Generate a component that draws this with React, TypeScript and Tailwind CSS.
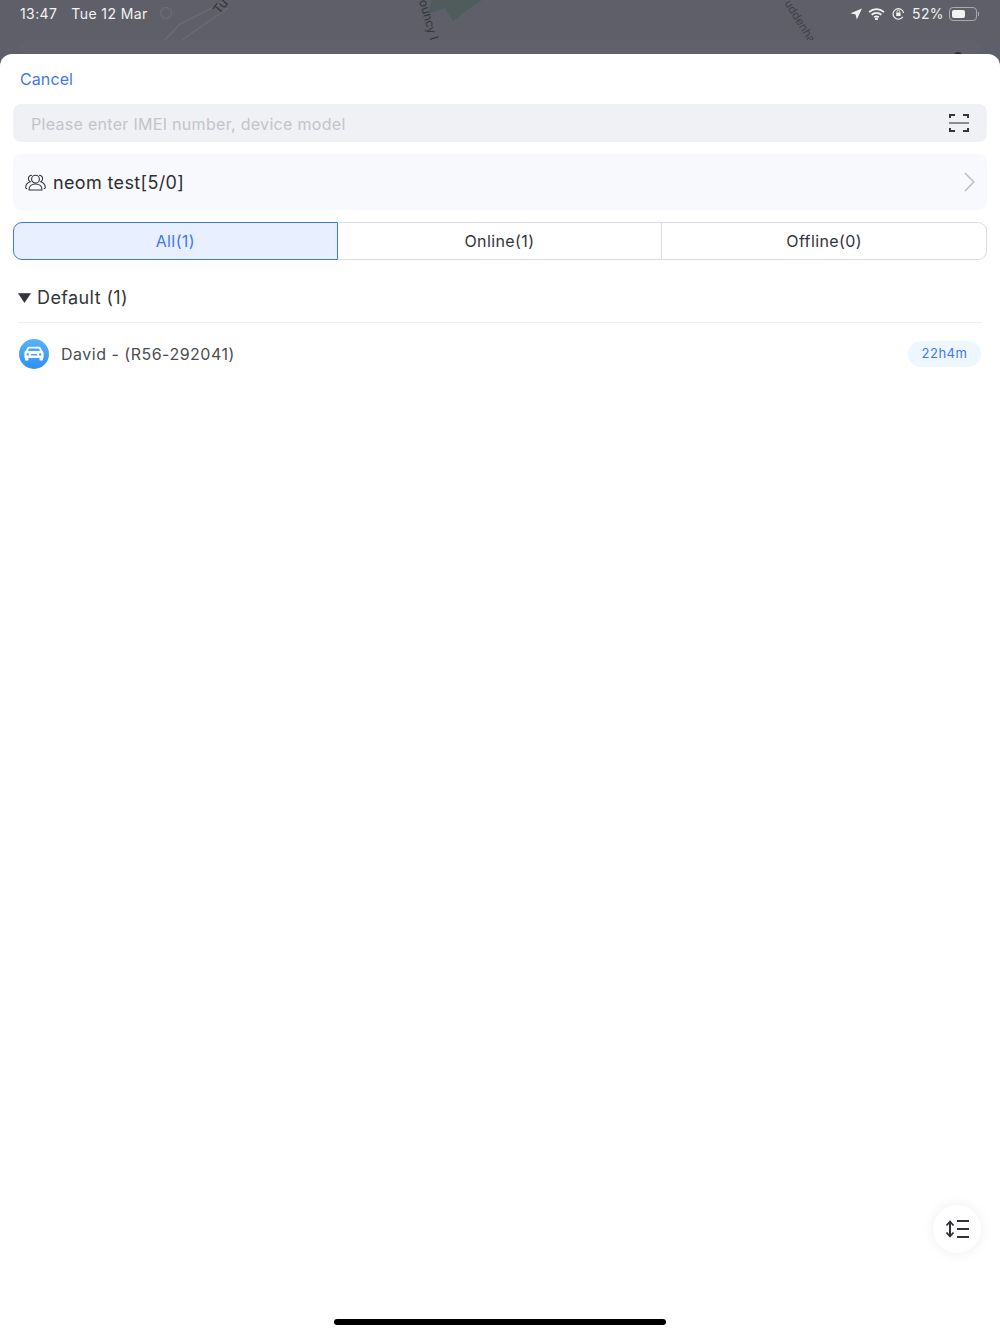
const fontStack = { fontFamily: 'Inter, "Noto Sans", sans-serif' }

function MapBackdrop() {
  return (
    <svg className="absolute inset-0" width="1000" height="54" viewBox="0 0 1000 54">
      <path d="M428 14 L445 8 L453 21 L470 8 L482 0 L432 0 Z" fill="#505c5c" />
      <path d="M165 40 L180 24 L224 2 M182 40 L196 30 L228 8" fill="none" stroke="#6a6b73" strokeWidth="1.5" />
      <circle cx="166" cy="13" r="5.5" fill="none" stroke="#6a6b73" strokeWidth="1.5" />
      <text x="219" y="15" fontSize="13" fill="#33343c" transform="rotate(-50 219 15)" style={fontStack}>Tu</text>
      <text x="419" y="1" fontSize="12" fill="#33343c" transform="rotate(74 419 1)" style={fontStack}>ouncy L</text>
      <text x="784" y="3" fontSize="11.5" fill="#3f4048" transform="rotate(58 784 3)" style={fontStack}>uddenha</text>
      <rect x="20" y="40" width="960" height="20" rx="8" fill="#60616a" />
      <circle cx="958" cy="56" r="4" fill="#2f3036" />
      <rect x="981" y="48" width="30" height="14" rx="2" fill="none" stroke="#56607e" />
    </svg>
  )
}

function StatusBar() {
  return (
    <div className="relative h-[54px] bg-[#5e5f68] overflow-hidden">
      <MapBackdrop />
      <div className="relative flex items-center justify-between pl-5 pr-[21px] h-[27px] text-[14px] tracking-[0.4px] text-[#f2f2f4]">
        <div className="flex gap-[14px]">
          <span>13:47</span>
          <span>Tue 12 Mar</span>
        </div>
        <div className="flex items-center gap-[7px]">
          <svg className="-mr-px" width="12" height="12" viewBox="0 0 12 12"><path d="M12 0.5 L6.8 11.5 L5.6 6.4 L0.5 5.2 Z" fill="#f2f2f4" /></svg>
          <svg width="17" height="12" viewBox="0 0 17 12" fill="none" stroke="#f2f2f4" strokeWidth="1.8">
            <path d="M1 4.2 C5.5 0.2 11.5 0.2 16 4.2" />
            <path d="M3.6 6.8 C6.5 4.4 10.5 4.4 13.4 6.8" />
            <path d="M6.2 9.2 C7.6 8.2 9.4 8.2 10.8 9.2" />
            <circle cx="8.5" cy="11" r="0.6" fill="#f2f2f4" />
          </svg>
          <svg width="13" height="13" viewBox="0 0 13 13" fill="none">
            <path d="M10.8 9.9 A5.3 5.3 0 1 1 11.6 6" stroke="#f2f2f4" strokeWidth="1.2" />
            <rect x="4.2" y="5.6" width="4.4" height="3.4" rx="0.5" fill="#f2f2f4" />
            <path d="M5 5.6 V4.6 A1.4 1.4 0 0 1 7.8 4.6 V5.6" stroke="#f2f2f4" strokeWidth="0.9" />
          </svg>
          <span>52%</span>
          <div className="flex items-center -ml-[2px]">
            <div className="w-[28px] h-[14px] rounded-[4px] border border-[#a9aab0] p-[2px]">
              <div className="w-[13px] h-full rounded-[2px] bg-[#f2f2f4]" />
            </div>
            <div className="w-px h-[4px] ml-px bg-[#a9aab0]" />
          </div>
        </div>
      </div>
    </div>
  )
}

function ScanIcon() {
  return (
    <svg width="22" height="20" viewBox="0 0 22 20" fill="none" stroke="#33353b" strokeWidth="2">
      <path d="M2 5 V2 H7 M15 2 H20 V5 M2 15 V18 H7 M15 18 H20 V15" />
      <path d="M1 10 H21" stroke="#55575c" strokeWidth="1.3" />
    </svg>
  )
}

function GroupIcon() {
  return (
    <svg width="21" height="17" viewBox="0 0 21 17" fill="none" stroke="#33353b" strokeWidth="1.1">
      <circle cx="10.5" cy="5.2" r="3.9" />
      <path d="M4 16 C4 12 6.5 10 10.5 10 C14.5 10 17 12 17 16 Z" strokeLinejoin="round" />
      <path d="M7 1.2 C4.4 1.2 3.2 3.2 3.4 5 C3.5 6.2 4.2 7.2 5.2 7.8 C2.6 8.6 0.8 10.6 0.7 13.4 C0.7 14.2 1.2 14.6 2.2 14.6" />
      <path d="M14 1.2 C16.6 1.2 17.8 3.2 17.6 5 C17.5 6.2 16.8 7.2 15.8 7.8 C18.4 8.6 20.2 10.6 20.3 13.4 C20.3 14.2 19.8 14.6 18.8 14.6" />
    </svg>
  )
}

function CarBadge() {
  return (
    <div className="w-[30px] h-[30px] rounded-full bg-gradient-to-b from-[#56b4fb] to-[#2f8ff6] flex items-center justify-center">
      <svg width="20" height="15" viewBox="0 0 20 15" fill="#ffffff">
        <path d="M4.6 0.8 H15.4 C16 0.8 16.5 1.1 16.8 1.7 L18 4.6 C19 5.2 19.6 6.2 19.6 7.4 V12 H0.4 V7.4 C0.4 6.2 1 5.2 2 4.6 L3.2 1.7 C3.5 1.1 4 0.8 4.6 0.8 Z M5 2.4 L4 5 H16 L15 2.4 Z M3.8 7.2 A1.2 1.2 0 1 0 3.8 9.6 A1.2 1.2 0 1 0 3.8 7.2 Z M16.2 7.2 A1.2 1.2 0 1 0 16.2 9.6 A1.2 1.2 0 1 0 16.2 7.2 Z M7 8 V9.4 H13 V8 Z" fillRule="evenodd" />
        <rect x="1" y="12" width="3.5" height="2.6" rx="0.8" />
        <rect x="15.5" y="12" width="3.5" height="2.6" rx="0.8" />
      </svg>
    </div>
  )
}

function SortIcon() {
  return (
    <svg width="24" height="20" viewBox="0 0 24 20" fill="none" stroke="#2f3136" strokeWidth="2">
      <path d="M5 3 V17" />
      <path d="M1.5 6.5 L5 2.5 L8.5 6.5 M1.5 13.5 L5 17.5 L8.5 13.5" strokeWidth="1.8" />
      <path d="M12 2 H24 M12 10 H24 M12 18 H24" />
    </svg>
  )
}

export default function App() {
  return (
    <div className="relative w-[1000px] h-[1334px] overflow-hidden bg-[#5e5f68]" style={fontStack}>
      <StatusBar />

      <div className="h-[1280px] bg-white rounded-t-[12px] px-[13px] flex flex-col">
        {/* header */}
        <div className="h-[50px] pt-[13px] pl-[7px] text-[16px] tracking-[0.1px] leading-[25px] text-[#3b78f6]">Cancel</div>

        {/* search */}
        <div className="h-[38px] rounded-[8px] bg-[#f0f1f4] flex items-center justify-between pl-[18px] pr-[17px]">
          <span className="pt-[2px] text-[16px] tracking-[0.3px] text-[#c3c4c9]">Please enter IMEI number, device model</span>
          <ScanIcon />
        </div>

        {/* group picker */}
        <div className="mt-3 h-[56px] rounded-[8px] bg-[#f8f9fc] flex items-center pl-[12px] pr-[12px]">
          <GroupIcon />
          <span className="ml-[7px] text-[18px] tracking-[0.35px] text-[#2c2e33]">neom test[5/0]</span>
          <svg className="ml-auto" width="11" height="20" viewBox="0 0 11 20" fill="none" stroke="#bcbec3" strokeWidth="1.5">
            <path d="M1 1 L9.8 10 L1 19" />
          </svg>
        </div>

        {/* tabs */}
        <div className="mt-3 h-[38px] grid grid-cols-3 text-[16px] tracking-[0.4px]">
          <div className="rounded-l-[9px] border-[1.5px] border-[#3b78f6] bg-[#e8effe] text-[#3b78f6] flex items-center justify-center">All(1)</div>
          <div className="border-y border-r border-[#dcdde6] text-[#33353b] flex items-center justify-center">Online(1)</div>
          <div className="rounded-r-[9px] border-y border-r border-[#dcdde6] text-[#33353b] flex items-center justify-center">Offline(0)</div>
        </div>

        {/* device group */}
        <div className="mt-[13px] mx-[5px] h-[50px] border-b border-[#f0f0f2] flex items-center gap-[6px]">
          <svg width="13" height="10" viewBox="0 0 13 10"><path d="M0.5 0.5 H12.5 L6.5 9.5 Z" fill="#33353b" strokeLinejoin="round" stroke="#33353b" strokeWidth="0.6" /></svg>
          <span className="text-[18px] tracking-[0.4px] text-[#33353b]">Default (1)</span>
        </div>

        <div className="h-[61px] flex items-center pl-[6px] pr-[6px]">
          <CarBadge />
          <span className="ml-3 text-[16px] tracking-[0.5px] text-[#4b4d53]">David - (R56-292041)</span>
          <span className="ml-auto h-[26px] w-[73px] rounded-full bg-[#eef6ff] text-[#3b78f6] text-[13px] tracking-[0.5px] flex items-center justify-center">22h4m</span>
        </div>
      </div>

      {/* floating sort button */}
      <div className="absolute left-[933px] top-[1205px] w-[48px] h-[48px] rounded-full bg-white shadow-[0_0_14px_rgba(0,0,0,0.07)] flex items-center justify-center">
        <SortIcon />
      </div>

      {/* home indicator */}
      <div className="absolute left-[334px] top-[1319px] w-[332px] h-[6px] rounded-full bg-black" />
    </div>
  )
}
